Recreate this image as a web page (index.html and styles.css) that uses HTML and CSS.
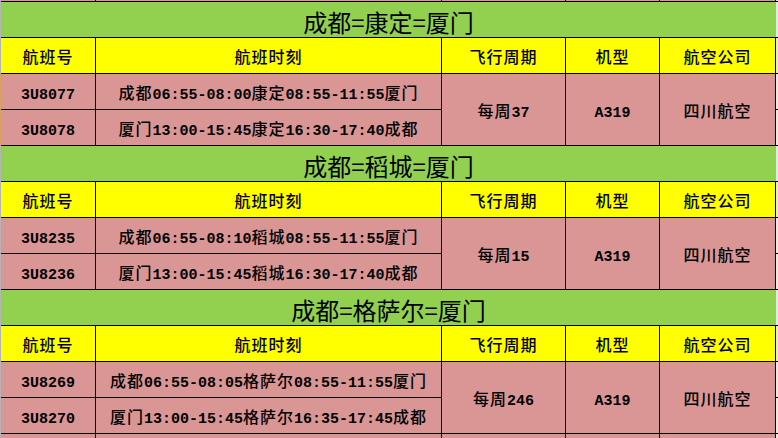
FILE: index.html
```html
<!DOCTYPE html>
<html lang="zh-CN">
<head>
<meta charset="utf-8">
<title>航班时刻表</title>
<link rel="stylesheet" href="styles.css">
</head>
<body>
<div class="page">
  <div class="lead"></div>
  <div class="sheet">
    <div class="c top"></div><div class="c top"></div><div class="c top"></div><div class="c top"></div><div class="c top"></div>

    <div class="title"><span>成都=康定=厦门</span></div>
    <div class="c h"><span>航班号</span></div>
    <div class="c h"><span>航班时刻</span></div>
    <div class="c h"><span>飞行周期</span></div>
    <div class="c h"><span>机型</span></div>
    <div class="c h"><span>航空公司</span></div>
    <div class="c"><span><span class="n">3U8077</span></span></div>
    <div class="c"><span>成都<span class="n">06:55-08:00</span>康定<span class="n">08:55-11:55</span>厦门</span></div>
    <div class="c span2"><span>每周<span class="n">37</span></span></div>
    <div class="c span2"><span><span class="n">A319</span></span></div>
    <div class="c span2"><span>四川航空</span></div>
    <div class="c"><span><span class="n">3U8078</span></span></div>
    <div class="c"><span>厦门<span class="n">13:00-15:45</span>康定<span class="n">16:30-17:40</span>成都</span></div>

    <div class="title"><span>成都=稻城=厦门</span></div>
    <div class="c h"><span>航班号</span></div>
    <div class="c h"><span>航班时刻</span></div>
    <div class="c h"><span>飞行周期</span></div>
    <div class="c h"><span>机型</span></div>
    <div class="c h"><span>航空公司</span></div>
    <div class="c"><span><span class="n">3U8235</span></span></div>
    <div class="c"><span>成都<span class="n">06:55-08:10</span>稻城<span class="n">08:55-11:55</span>厦门</span></div>
    <div class="c span2"><span>每周<span class="n">15</span></span></div>
    <div class="c span2"><span><span class="n">A319</span></span></div>
    <div class="c span2"><span>四川航空</span></div>
    <div class="c"><span><span class="n">3U8236</span></span></div>
    <div class="c"><span>厦门<span class="n">13:00-15:45</span>稻城<span class="n">16:30-17:40</span>成都</span></div>

    <div class="title"><span>成都=格萨尔=厦门</span></div>
    <div class="c h"><span>航班号</span></div>
    <div class="c h"><span>航班时刻</span></div>
    <div class="c h"><span>飞行周期</span></div>
    <div class="c h"><span>机型</span></div>
    <div class="c h"><span>航空公司</span></div>
    <div class="c"><span><span class="n">3U8269</span></span></div>
    <div class="c"><span>成都<span class="n">06:55-08:05</span>格萨尔<span class="n">08:55-11:55</span>厦门</span></div>
    <div class="c span2"><span>每周<span class="n">246</span></span></div>
    <div class="c span2"><span><span class="n">A319</span></span></div>
    <div class="c span2"><span>四川航空</span></div>
    <div class="c"><span><span class="n">3U8270</span></span></div>
    <div class="c"><span>厦门<span class="n">13:00-15:45</span>格萨尔<span class="n">16:35-17:45</span>成都</span></div>

    <div class="c bottom"></div><div class="c bottom"></div><div class="c bottom"></div><div class="c bottom"></div><div class="c bottom"></div>
  </div>
  <div class="tail"></div>
</div>
</body>
</html>
```
FILE: styles.css
```css
html, body {
  margin: 0;
  padding: 0;
  background: #dfeee0;
  overflow: hidden;
}

.page {
  display: flex;
  width: 778px;
  height: 438px;
  color: #000;
  font-family: "Noto Sans CJK SC", sans-serif;
}

.lead {
  width: 1px;
  flex: none;
  background: linear-gradient(#b5b5b5 0 74px, #d9a25b 74px 145px, #b5b5b5 145px);
}

.sheet {
  width: 775px;
  flex: none;
  display: grid;
  grid-template-columns: 95px 346px 124px 94px 116px;
  align-content: start;
}

.tail {
  width: 2px;
  flex: none;
  background-image: linear-gradient(#000 0 1px, #dfeee0 1px);
  background-size: 2px 36px;
  background-position: 0 1px;
}

.c {
  box-sizing: border-box;
  height: 36px;
  border-right: 1px solid #000;
  border-bottom: 1px solid #000;
  background: #da9694;
  display: flex;
  align-items: center;
  justify-content: center;
  font-size: 16px;
  font-weight: 500;
  letter-spacing: 1px;
  white-space: nowrap;
}

.c.h {
  background: #ffff00;
}

.c.span2 {
  grid-row: span 2;
  height: 72px;
}

.c.top {
  height: 2px;
}

.c.bottom {
  height: 4px;
  border-bottom: none;
}

.n {
  font-family: "Liberation Mono", monospace;
  font-size: 15px;
  font-weight: bold;
  letter-spacing: 0;
}

.title {
  grid-column: 1 / -1;
  box-sizing: border-box;
  height: 36px;
  background: #92d050;
  border-bottom: 1px solid #000;
  display: flex;
  align-items: center;
  justify-content: center;
  padding-top: 3px;
  font-size: 24px;
  font-weight: 400;
  white-space: nowrap;
}
```
